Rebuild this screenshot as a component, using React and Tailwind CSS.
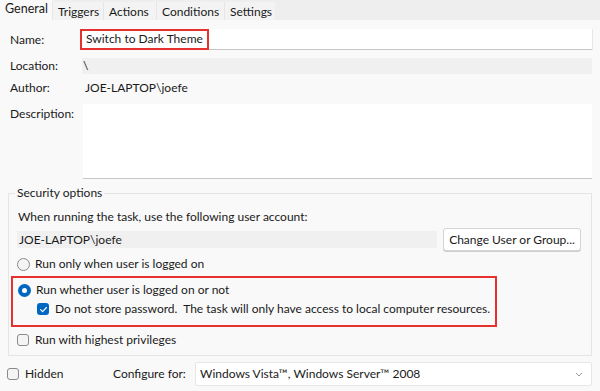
import { useState } from "react";

const tabs = [
  { label: "General", w: "w-[52px]" },
  { label: "Triggers", w: "w-[51px]" },
  { label: "Actions", w: "w-[53px]" },
  { label: "Conditions", w: "w-[68px]" },
  { label: "Settings", w: "w-[51px]" },
];

const Radio = ({ checked }) =>
  checked ? (
    <span className="w-[13px] h-[13px] rounded-full bg-[#0067c0] flex items-center justify-center shrink-0">
      <span className="w-[5px] h-[5px] rounded-full bg-white" />
    </span>
  ) : (
    <span className="w-[13px] h-[13px] rounded-full border border-[#8a8a8a] bg-[#f4f4f4] shrink-0" />
  );

const Check = ({ checked }) =>
  checked ? (
    <span className="w-[12px] h-[12px] rounded-[3px] bg-[#0067c0] flex items-center justify-center shrink-0">
      <svg width="9" height="9" viewBox="0 0 10 10" fill="none">
        <path d="M1.8 5.2 L4 7.3 L8.3 2.8" stroke="white" strokeWidth="1.3" strokeLinecap="round" strokeLinejoin="round" />
      </svg>
    </span>
  ) : (
    <span className="w-[12px] h-[12px] rounded-[3px] border border-[#8a8a8a] bg-[#f4f4f4] shrink-0" />
  );

export default function App() {
  const [active] = useState(0);

  return (
    <div
      className="w-[600px] h-[391px] bg-[#f9f9f9] text-[12px] leading-[16px] text-[#1a1a1a] overflow-hidden whitespace-nowrap"
      style={{ fontFamily: 'Lato, "Noto Sans", sans-serif' }}
    >
      {/* tab strip */}
      <div className="h-[20px] bg-[#eeeeee] flex items-end">
        {tabs.map((t, i) => (
          <div
            key={t.label}
            className={
              i === active
                ? `h-[20px] ${t.w} bg-[#f9f9f9] flex items-center pl-[5px] text-[12.5px] pb-[2px]`
                : `h-[18px] ${t.w} bg-[#f3f3f3] border-l border-[#e6e6e6] flex items-center pl-[5px] pt-[1px]`
            }
          >
            {t.label}
          </div>
        ))}
      </div>

      <div className="pl-[10px] pr-[8px]">
        {/* name */}
        <div className="flex items-center mt-[9px] h-[21px]">
          <span className="w-[70px]">Name:</span>
          <div className="flex-1 h-[21px] bg-white border-b border-[#c6c6c6] shadow-[1px_0_0_#e8e8e8] flex items-center">
            <span className="h-[21px] flex items-center px-[4px] border-2 border-[#e5322f]">Switch to Dark Theme</span>
          </div>
        </div>

        {/* location */}
        <div className="flex items-center mt-[8px] h-[16px]">
          <span className="w-[72px]">Location:</span>
          <div className="flex-1 h-[16px] bg-[#f0f0f0] pl-[1px] flex items-center">\</div>
        </div>

        {/* author */}
        <div className="flex items-center mt-[6px] h-[16px]">
          <span className="w-[75px]">Author:</span>
          <span>JOE-LAPTOP\joefe</span>
        </div>

        {/* description */}
        <div className="flex mt-[8px]">
          <span className="w-[73px] mt-[2px]">Description:</span>
          <div className="flex-1 h-[75px] bg-white border-b border-[#c6c6c6]" />
        </div>

        {/* security group */}
        <div className="relative mt-[14px] border border-[#e5e5e5] h-[163px] -ml-[2px] pl-[8px] pr-[10px]">
          <span className="absolute -top-[9px] left-[6px] bg-[#f9f9f9] px-[2px]">Security options</span>
          <div className="mt-[15px] pl-[1px]">When running the task, use the following user account:</div>
          <div className="flex items-center mt-[3px] gap-[6px]">
            <div className="w-[420px] h-[17px] bg-[#f0f0f0] flex items-center pl-[2px]">JOE-LAPTOP\joefe</div>
            <button className="h-[23px] w-[138px] bg-white border border-[#d4d4d4] rounded-[3px] shadow-[0_1px_0_#cfcfcf]">
              Change User or Group...
            </button>
          </div>
          <div className="flex items-center gap-[5px] mt-[5px]">
            <Radio />
            <span>Run only when user is logged on</span>
          </div>
          <div className="border-2 border-[#e5322f] w-[486px] h-[51px] -ml-[6px] mt-[4px] pl-[5px] pt-[4px]">
            <div className="flex items-center gap-[5px]">
              <Radio checked />
              <span>Run whether user is logged on or not</span>
            </div>
            <div className="flex items-center gap-[6px] mt-[3px] ml-[19px]">
              <Check checked />
              <span>Do not store password.&nbsp; The task will only have access to local computer resources.</span>
            </div>
          </div>
          <div className="flex items-center gap-[6px] mt-[5px]">
            <Check />
            <span>Run with highest privileges</span>
          </div>
        </div>

        {/* bottom row */}
        <div className="flex items-center mt-[6px] h-[24px] -ml-[3px]">
          <Check />
          <span className="ml-[6px] w-[88px]">Hidden</span>
          <span className="w-[82px]">Configure for:</span>
          <div className="flex-1 h-[24px] bg-white border border-[#e6e6e6] rounded-[2px] flex items-center justify-between pl-[4px] pr-[8px]">
            <span>Windows Vista™, Windows Server™ 2008</span>
            <svg width="8" height="5" viewBox="0 0 8 5" fill="none">
              <path d="M1 1 L4 4 L7 1" stroke="#9a9a9a" strokeWidth="1" />
            </svg>
          </div>
        </div>
      </div>
    </div>
  );
}
